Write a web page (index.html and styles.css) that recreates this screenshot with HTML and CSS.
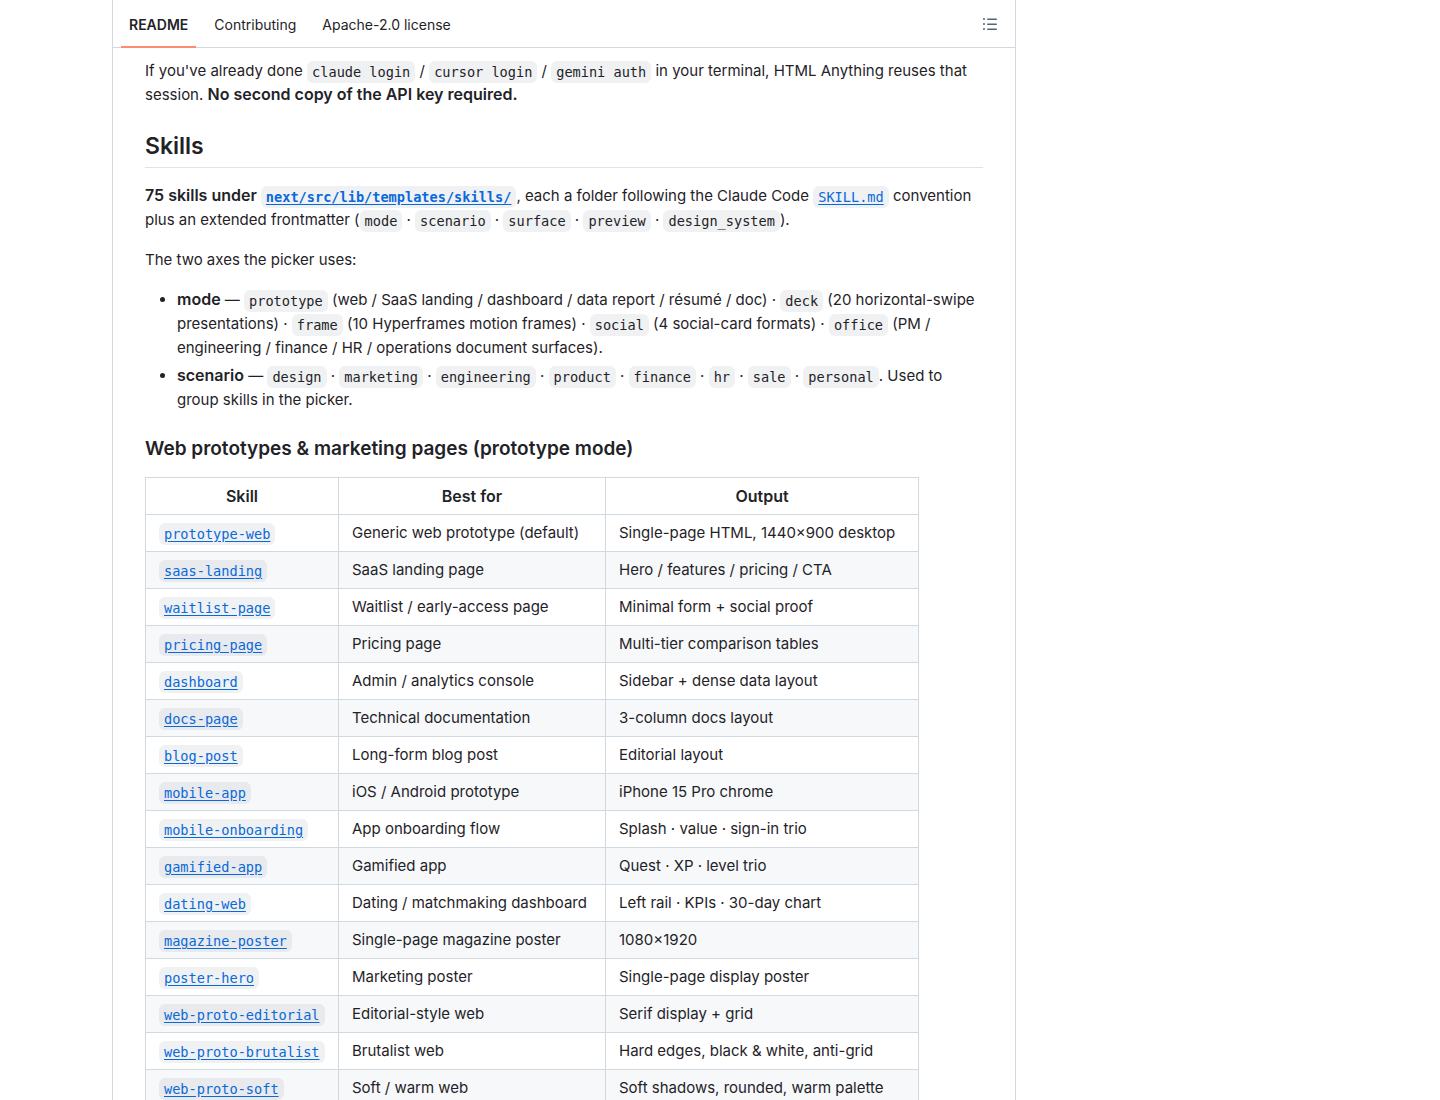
FILE: index.html
```html
<!DOCTYPE html>
<html lang="en">
<head>
    <meta charset="UTF-8">
    <meta name="viewport" content="width=device-width, initial-scale=1.0">
    <title>HTML Anything</title>
    <link rel="stylesheet" href="styles.css">
</head>
<body>
    <div class="layout">
        <main class="readme">
            <header class="readme-header">
                <nav class="tabs">
                    <a href="#readme" class="tab active">README</a>
                    <a href="#contributing" class="tab">Contributing</a>
                    <a href="#license" class="tab">Apache-2.0 license</a>
                </nav>
                <button type="button" class="outline-button" aria-label="Outline">
                    <svg width="16" height="16" viewBox="0 0 16 16" fill="currentColor" aria-hidden="true">
                        <path d="M5.75 2.5h8.5a.75.75 0 0 1 0 1.5h-8.5a.75.75 0 0 1 0-1.5Zm0 5h8.5a.75.75 0 0 1 0 1.5h-8.5a.75.75 0 0 1 0-1.5Zm0 5h8.5a.75.75 0 0 1 0 1.5h-8.5a.75.75 0 0 1 0-1.5ZM2 14a1 1 0 1 1 0-2 1 1 0 0 1 0 2Zm1-6a1 1 0 1 1-2 0 1 1 0 0 1 2 0ZM2 4a1 1 0 1 1 0-2 1 1 0 0 1 0 2Z"/>
                    </svg>
                </button>
            </header>

            <article class="markdown" id="readme">
                <p>If you've already done <code>claude login</code> / <code>cursor login</code> / <code>gemini auth</code> in your terminal, HTML Anything reuses that session. <strong>No second copy of the API key required.</strong></p>

                <h2>Skills</h2>
                <p><strong>75 skills under <a href="#skills"><code>next/src/lib/templates/skills/</code></a></strong>, each a folder following the Claude Code <a href="#skill-md"><code>SKILL.md</code></a> convention plus an extended frontmatter (<code>mode</code> · <code>scenario</code> · <code>surface</code> · <code>preview</code> · <code>design_system</code>).</p>
                <p>The two axes the picker uses:</p>
                <ul>
                    <li><strong>mode</strong> — <code>prototype</code> (web / SaaS landing / dashboard / data report / résumé / doc) · <code>deck</code> (20 horizontal-swipe presentations) · <code>frame</code> (10 Hyperframes motion frames) · <code>social</code> (4 social-card formats) · <code>office</code> (PM / engineering / finance / HR / operations document surfaces).</li>
                    <li><strong>scenario</strong> — <code>design</code> · <code>marketing</code> · <code>engineering</code> · <code>product</code> · <code>finance</code> · <code>hr</code> · <code>sale</code> · <code>personal</code>. Used to group skills in the picker.</li>
                </ul>

                <h3>Web prototypes &amp; marketing pages (prototype mode)</h3>
                <table>
                    <thead>
                        <tr>
                            <th class="col-skill">Skill</th>
                            <th class="col-best">Best for</th>
                            <th class="col-output">Output</th>
                        </tr>
                    </thead>
                    <tbody>
                        <tr><td><a href="#prototype-web"><code>prototype-web</code></a></td><td>Generic web prototype (default)</td><td>Single-page HTML, 1440×900 desktop</td></tr>
                        <tr><td><a href="#saas-landing"><code>saas-landing</code></a></td><td>SaaS landing page</td><td>Hero / features / pricing / CTA</td></tr>
                        <tr><td><a href="#waitlist-page"><code>waitlist-page</code></a></td><td>Waitlist / early-access page</td><td>Minimal form + social proof</td></tr>
                        <tr><td><a href="#pricing-page"><code>pricing-page</code></a></td><td>Pricing page</td><td>Multi-tier comparison tables</td></tr>
                        <tr><td><a href="#dashboard"><code>dashboard</code></a></td><td>Admin / analytics console</td><td>Sidebar + dense data layout</td></tr>
                        <tr><td><a href="#docs-page"><code>docs-page</code></a></td><td>Technical documentation</td><td>3-column docs layout</td></tr>
                        <tr><td><a href="#blog-post"><code>blog-post</code></a></td><td>Long-form blog post</td><td>Editorial layout</td></tr>
                        <tr><td><a href="#mobile-app"><code>mobile-app</code></a></td><td>iOS / Android prototype</td><td>iPhone 15 Pro chrome</td></tr>
                        <tr><td><a href="#mobile-onboarding"><code>mobile-onboarding</code></a></td><td>App onboarding flow</td><td>Splash · value · sign-in trio</td></tr>
                        <tr><td><a href="#gamified-app"><code>gamified-app</code></a></td><td>Gamified app</td><td>Quest · XP · level trio</td></tr>
                        <tr><td><a href="#dating-web"><code>dating-web</code></a></td><td>Dating / matchmaking dashboard</td><td>Left rail · KPIs · 30-day chart</td></tr>
                        <tr><td><a href="#magazine-poster"><code>magazine-poster</code></a></td><td>Single-page magazine poster</td><td>1080×1920</td></tr>
                        <tr><td><a href="#poster-hero"><code>poster-hero</code></a></td><td>Marketing poster</td><td>Single-page display poster</td></tr>
                        <tr><td><a href="#web-proto-editorial"><code>web-proto-editorial</code></a></td><td>Editorial-style web</td><td>Serif display + grid</td></tr>
                        <tr><td><a href="#web-proto-brutalist"><code>web-proto-brutalist</code></a></td><td>Brutalist web</td><td>Hard edges, black &amp; white, anti-grid</td></tr>
                        <tr><td><a href="#web-proto-soft"><code>web-proto-soft</code></a></td><td>Soft / warm web</td><td>Soft shadows, rounded, warm palette</td></tr>
                    </tbody>
                </table>
            </article>
        </main>
    </div>
</body>
</html>
```

FILE: styles.css
```css
* {
    box-sizing: border-box;
}

body {
    margin: 0;
    background-color: #fff;
    color: #1f2328;
    font-family: Inter, "Liberation Sans", sans-serif;
    font-size: 15px;
    line-height: 24px;
}

a {
    color: #0969da;
    text-underline-offset: 3px;
}

.layout {
    display: grid;
    grid-template-columns: minmax(0, 1fr) 296px;
    gap: 16px;
    max-width: 1216px;
    height: 100vh;
    margin: 0 auto;
    overflow: hidden;
}

.readme {
    border: 1px solid #d1d9e0;
    border-width: 0 1px;
}

/* Tab bar */
.readme-header {
    display: flex;
    align-items: center;
    justify-content: space-between;
    height: 48px;
    padding: 0 9px 0 8px;
    border-bottom: 1px solid #d1d9e0;
}

.tabs {
    display: flex;
    gap: 10px;
    height: 48px;
}

.tab {
    padding: 2px 8px 0;
    border-bottom: 2px solid transparent;
    color: #1f2328;
    font-size: 14px;
    line-height: 46px;
    text-decoration: none;
}

.tab.active {
    border-bottom-color: #fd8c73;
    font-weight: 600;
}

.outline-button {
    display: flex;
    padding: 8px;
    border: none;
    background: none;
    color: #59636e;
    cursor: pointer;
}

/* Readme text */
.markdown {
    padding: 11px 32px 32px;
}

.markdown p,
.markdown ul {
    margin: 0 0 16px;
}

.markdown ul {
    padding-left: 32px;
}

.markdown li + li {
    margin-top: 4px;
}

.markdown strong,
.markdown th {
    font-size: 16px;
    font-weight: 600;
}

.markdown strong {
    line-height: 20px;
}

.markdown h2,
.markdown h3 {
    margin: 24px 0 16px;
    font-weight: 600;
}

.markdown h2 {
    padding-bottom: 6px;
    border-bottom: 1px solid #d1d9e0b3;
    font-size: 23px;
    line-height: 30px;
}

.markdown h3 {
    font-size: 19px;
    line-height: 25px;
}

.markdown code {
    padding: 3px 5px;
    border-radius: 6px;
    background-color: #818b981f;
    font-family: "DejaVu Sans Mono", monospace;
    font-size: 0.85rem;
    line-height: 16px;
    vertical-align: -1px;
    white-space: break-spaces;
}

.markdown table {
    border-collapse: collapse;
}

.markdown th,
.markdown td {
    padding: 6px 13px;
    border: 1px solid #d1d9e0;
}

.markdown td,
.markdown td code {
    white-space: nowrap;
}

.markdown .col-skill {
    width: 193px;
}

.markdown .col-best {
    width: 267px;
}

.markdown .col-output {
    width: 313px;
}

.markdown tbody tr:nth-child(even) {
    background-color: #f6f8fa;
}
```
